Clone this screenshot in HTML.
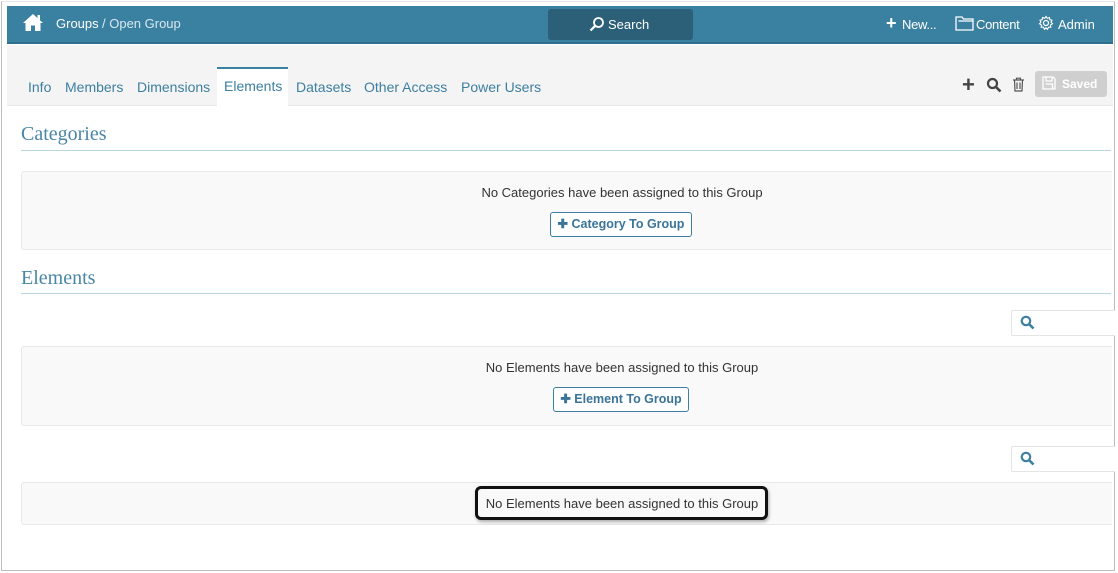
<!DOCTYPE html>
<html><head><style>
*{box-sizing:border-box;margin:0;padding:0}
body{width:1118px;height:573px;background:#fff;font-family:"Liberation Sans",Arial,sans-serif;position:relative;overflow:hidden}
.a{position:absolute}
.frame{left:1px;top:1px;width:1114px;height:570px;border:1px solid #bdbdbd;border-top-color:#e5e5e5}
.hdr{left:7px;top:6px;width:1106px;height:38px;background:#3a80a0;border-bottom:2px solid #2f6e8c}
.hdr span{color:#fff;font-size:13px}
.sub{left:7px;top:45px;width:1106px;height:61px;background:#f4f4f4;border-bottom:1px solid #e6e6e6}
.tab{top:79px;font-size:14px;color:#3d7fa0}
.h{font-family:"Liberation Serif","DejaVu Serif",serif;color:#4a86a5;font-size:20px}
.line{height:1px;background:#b9d5e0}
.box{background:#f9f9f9;border:1px solid #e8e8e8;border-right:none;border-radius:3px 0 0 3px}
.msg{font-size:13px;color:#333;text-align:center;width:1200px;left:0}
.btn{border:1px solid #3d7fa0;border-radius:3px;background:#fff;color:#3a7499;font-size:12.5px;font-weight:bold;height:25px;line-height:23px;text-align:center}
.srch{width:104px;height:26px;border:1px solid #e4e4e4;border-right:none;background:#fff;border-radius:2px 0 0 2px}
</style></head><body>
<div class="a frame"></div>
<div class="a hdr">
 <svg class="a" style="left:15px;top:7px" width="22" height="19" viewBox="0 0 22 19"><path d="M11 1 L1 10 L3.5 10 L3.5 18 L9 18 L9 12.5 L13 12.5 L13 18 L18.5 18 L18.5 10 L21 10 Z" fill="#fff"/><rect x="15.5" y="2" width="2.5" height="5" fill="#fff"/></svg>
 <span class="a" style="left:49px;top:10px">Groups</span><span class="a" style="left:95px;top:10px;color:#d9e8f0">/ Open Group</span>
 <div class="a" style="left:541px;top:3px;width:145px;height:31px;background:#2c5f78;border-radius:3px"></div>
 <svg class="a" style="left:582px;top:10px" width="16" height="16" viewBox="0 0 16 16"><circle cx="9.5" cy="6.5" r="4.5" stroke="#fff" stroke-width="1.8" fill="none"/><path d="M6.3 9.7 L1.5 14.5" stroke="#fff" stroke-width="2.2"/></svg>
 <span class="a" style="left:601px;top:11px">Search</span>
 <span class="a" style="left:879px;top:7px;font-size:18px;font-weight:bold">+</span><span class="a" style="left:895px;top:11px;letter-spacing:-0.3px">New...</span>
 <svg class="a" style="left:948px;top:9px" width="19" height="16" viewBox="0 0 19 16"><path d="M1 2 H7 L8.5 4 H18 V15 H1 Z M3.5 6 H18" stroke="#fff" stroke-width="1.3" fill="none"/></svg>
 <span class="a" style="left:969px;top:11px;letter-spacing:-0.3px">Content</span>
 <svg class="a" style="left:1031px;top:9px" width="16" height="16" viewBox="0 0 16 16"><circle cx="8" cy="8" r="2.5" stroke="#fff" stroke-width="1.3" fill="none"/><path d="M8 1.5 L9.3 3.3 L11.5 2.5 L11.8 4.7 L14 5.2 L13 7.2 L14.5 8.8 L12.5 10 L12.8 12.2 L10.6 12.2 L9.5 14.3 L8 12.8 L6.5 14.3 L5.4 12.2 L3.2 12.2 L3.5 10 L1.5 8.8 L3 7.2 L2 5.2 L4.2 4.7 L4.5 2.5 L6.7 3.3 Z" stroke="#fff" stroke-width="1.1" fill="none"/></svg>
 <span class="a" style="left:1051px;top:11px">Admin</span>
</div>
<div class="a sub"></div>
<div class="a" style="left:217px;top:67px;width:71px;height:40px;background:#fff;border-top:2px solid #3a80a0"></div>
<span class="a tab" style="left:28px">Info</span>
<span class="a tab" style="left:65px">Members</span>
<span class="a tab" style="left:137px">Dimensions</span>
<span class="a tab" style="left:224px;top:78px">Elements</span>
<span class="a tab" style="left:296px">Datasets</span>
<span class="a tab" style="left:364px">Other Access</span>
<span class="a tab" style="left:461px">Power Users</span>
<span class="a" style="left:962px;top:72px;font-size:22px;font-weight:bold;color:#444">+</span>
<svg class="a" style="left:986px;top:77px" width="16" height="16" viewBox="0 0 16 16"><circle cx="6.5" cy="6.5" r="4.5" stroke="#444" stroke-width="2.2" fill="none"/><path d="M10 10 L14.5 14.5" stroke="#444" stroke-width="2.6"/></svg>
<svg class="a" style="left:1012px;top:77px" width="13" height="15" viewBox="0 0 13 15"><path d="M1 3 H12 M4.5 3 V1.2 H8.5 V3 M2.5 3 L3 14 H10 L10.5 3 M5 5.5 V12 M8 5.5 V12" stroke="#555" stroke-width="1.2" fill="none"/></svg>
<div class="a" style="left:1035px;top:71px;width:72px;height:26px;background:#cfcfcf;border-radius:3px"></div>
<svg class="a" style="left:1042px;top:76px" width="14" height="14" viewBox="0 0 14 14"><path d="M1 1 H11 L13 3 V13 H1 Z M4 1 V5 H10 V1 M3.5 8 H10.5 V13" stroke="#fff" stroke-width="1.3" fill="none"/></svg>
<span class="a" style="left:1062px;top:77px;font-size:12px;font-weight:bold;color:#fff">Saved</span>

<span class="a h" style="left:21px;top:123px">Categories</span>
<div class="a line" style="left:21px;top:150px;width:1090px"></div>
<div class="a box" style="left:21px;top:171px;width:1091px;height:79px"><div class="a msg" style="top:13px">No Categories have been assigned to this Group</div></div>
<div class="a btn" style="left:550px;top:212px;width:142px">✚ Category To Group</div>

<span class="a h" style="left:21px;top:267px">Elements</span>
<div class="a line" style="left:21px;top:293px;width:1090px"></div>
<div class="a srch" style="left:1011px;top:310px"></div>
<svg class="a" style="left:1020px;top:315px" width="15" height="15" viewBox="0 0 15 15"><circle cx="6" cy="6" r="4.2" stroke="#3d7fa0" stroke-width="2.2" fill="none"/><path d="M9 9 L13.5 13.5" stroke="#3d7fa0" stroke-width="2.6"/></svg>
<div class="a box" style="left:21px;top:346px;width:1091px;height:80px"><div class="a msg" style="top:13px">No Elements have been assigned to this Group</div></div>
<div class="a btn" style="left:553px;top:387px;width:136px">✚ Element To Group</div>

<div class="a srch" style="left:1011px;top:446px"></div>
<svg class="a" style="left:1020px;top:451px" width="15" height="15" viewBox="0 0 15 15"><circle cx="6" cy="6" r="4.2" stroke="#3d7fa0" stroke-width="2.2" fill="none"/><path d="M9 9 L13.5 13.5" stroke="#3d7fa0" stroke-width="2.6"/></svg>
<div class="a box" style="left:21px;top:482px;width:1091px;height:43px"><div class="a msg" style="top:13px">No Elements have been assigned to this Group</div></div>
<div class="a" style="left:475px;top:486px;width:293px;height:34px;border:3px solid #111;border-radius:6px;box-shadow:1px 2px 3px rgba(0,0,0,.3)"></div>
</body></html>
